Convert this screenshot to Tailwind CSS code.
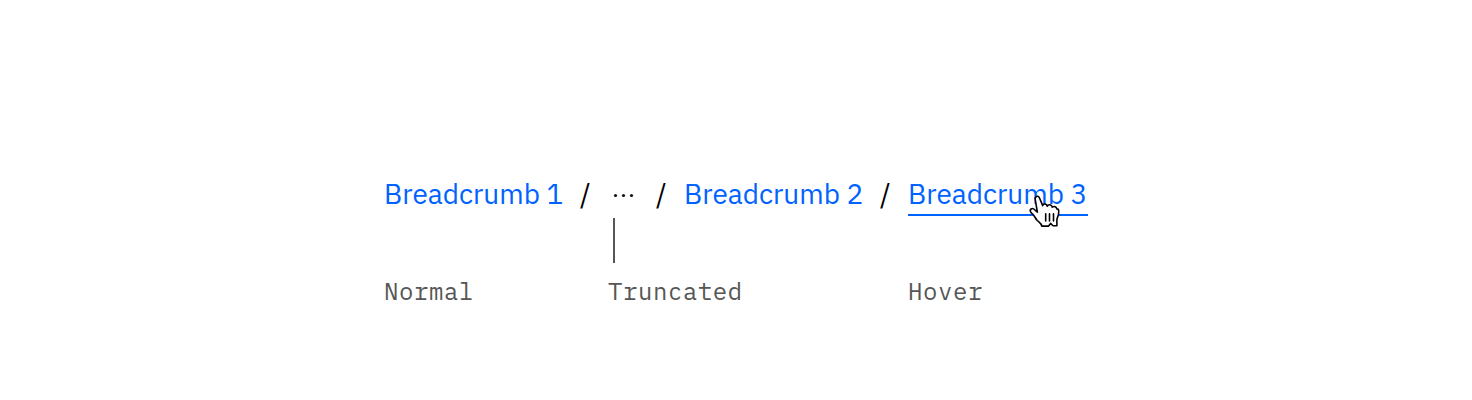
<!DOCTYPE html>
<html lang="en"><head><meta charset="utf-8"><title>Breadcrumb states</title>
<script src="https://cdn.jsdelivr.net/npm/@tailwindcss/browser@4"></script></head>
<body class="bg-white overflow-hidden">
<main class="w-[1472px] h-[400px] pl-96 pt-[174px] font-['IBM_Plex_Sans',Roboto,sans-serif]">
  <nav class="flex h-[42px] text-[28px] leading-10 whitespace-nowrap text-[#0062ff]">
    <a class="w-[180px]">Breadcrumb 1</a>
    <span class="w-[44px] pl-4 leading-10 text-black">/</span>
    <svg class="w-[30px] h-[42px]" viewBox="0 0 30 42" fill="#161616"><circle cx="7.5" cy="21.5" r="1.6"/><circle cx="15.5" cy="21.5" r="1.6"/><circle cx="23.5" cy="21.5" r="1.6"/></svg>
    <span class="w-[46px] pl-[18px] leading-10 text-black">/</span>
    <a class="w-[180px]">Breadcrumb 2</a>
    <span class="w-[44px] pl-4 leading-10 text-black">/</span>
    <a class="relative w-[180px] h-[42px] border-b-2 border-[#0062ff]">Breadcrumb 3
      <svg class="absolute left-[120px] top-5 w-[34px] h-[34px]" viewBox="0 0 34 34" fill="#fff" stroke="#000" stroke-width="1.6" stroke-linejoin="round" stroke-linecap="round"><path d="M9.4 18.2L7.2 5.4C6.7 2.2 10.2 1 11.6 4.2L14.7 11.6C15.2 9.3 18.6 9.4 19.3 12.2C20.3 9.9 23.8 10.5 24.2 13.1C26.4 11.8 28.4 13 28.8 14.9C30.9 14.6 31 17 30.5 20.5L28.9 25.2V31.8H25L22.6 29.4L20.6 32.1H13.8C13.5 29.2 11.4 28.5 9.2 26.5C7.3 24.4 6.3 20.8 3 18.6C0.8 15.3 4.2 13.2 6.8 15.8L9.4 18.2"/><path d="M17.7 19.7V27M21.5 19.7V27M25.5 19.7V27"/></svg>
    </a>
  </nav>
  <div class="pl-[229px] pt-0.5"><div class="w-0.5 h-[44.5px] bg-[#565656]"></div></div>
  <div class="grid grid-cols-[224px_300px_180px] mt-[12.5px] font-['IBM_Plex_Mono','Liberation_Mono',monospace] text-[24px] leading-8 tracking-[0.58px] text-[#565656]"><span>Normal</span><span>Truncated</span><span>Hover</span></div>
</main></body></html>
